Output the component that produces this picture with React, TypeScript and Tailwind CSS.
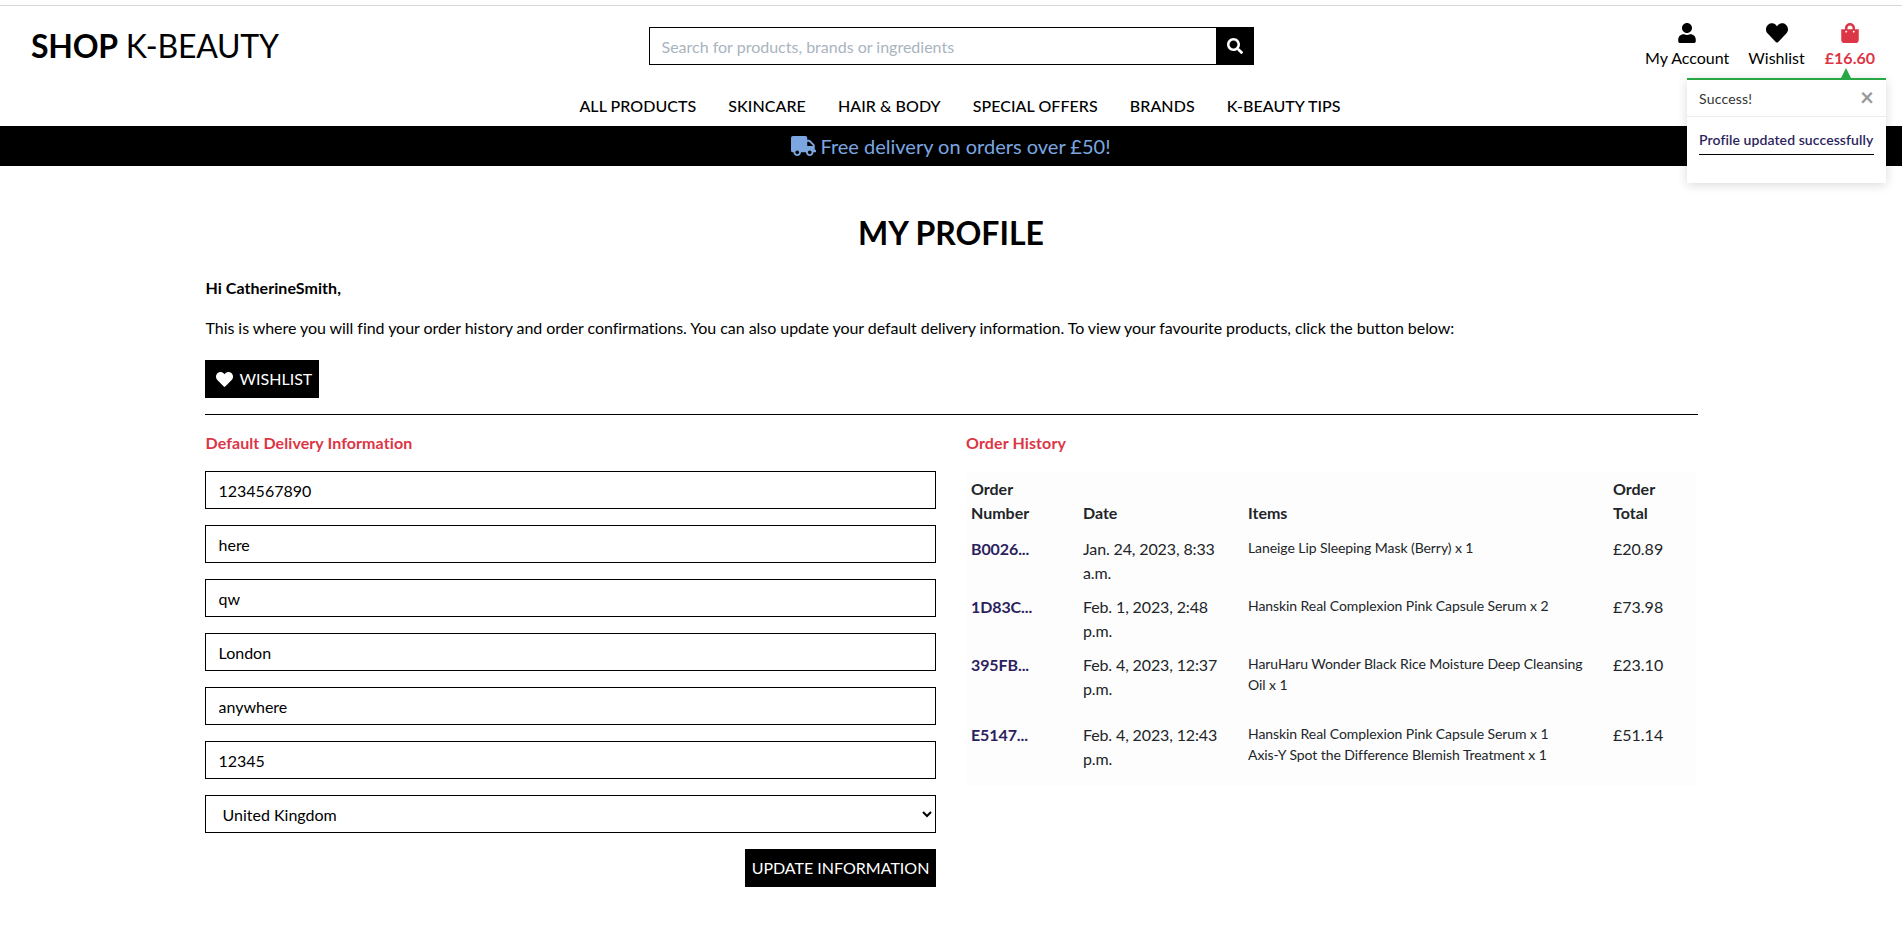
import { FaUser, FaHeart, FaShoppingBag, FaSearch, FaTruck } from "react-icons/fa";

const fields = ["1234567890", "here", "qw", "London", "anywhere", "12345"];

const orders = [
  { no: "B0026...", date: ["Jan. 24, 2023, 8:33", "a.m."], items: ["Laneige Lip Sleeping Mask (Berry) x 1"], total: "£20.89", mb: "" },
  { no: "1D83C...", date: ["Feb. 1, 2023, 2:48", "p.m."], items: ["Hanskin Real Complexion Pink Capsule Serum x 2"], total: "£73.98", mb: "" },
  { no: "395FB...", date: ["Feb. 4, 2023, 12:37", "p.m."], items: ["HaruHaru Wonder Black Rice Moisture Deep Cleansing Oil x 1"], total: "£23.10", mb: "mb-[18px]" },
  { no: "E5147...", date: ["Feb. 4, 2023, 12:43", "p.m."], items: ["Hanskin Real Complexion Pink Capsule Serum x 1", "Axis-Y Spot the Difference Blemish Treatment x 1"], total: "£51.14", mb: "mb-[16px]" },
];

const navItems = ["ALL PRODUCTS", "SKINCARE", "HAIR & BODY", "SPECIAL OFFERS", "BRANDS", "K-BEAUTY TIPS"];

export default function App() {
  return (
    <div className="relative min-h-[926px] bg-white text-black font-['Lato','Liberation_Sans',sans-serif] text-base leading-6">
      <header className="pt-[5px]">
        <div className="border-t border-[#d6d6d6] grid grid-cols-[1fr_605px_1fr] items-start h-[89px]">
          <a className="pl-[31px] pt-[16px] text-[32px] leading-[48px] whitespace-nowrap tracking-[-0.25px]">
            <b className="font-bold">SHOP</b> K-BEAUTY
          </a>
          <form className="flex mt-[21px] h-[38px]">
            <input
              placeholder="Search for products, brands or ingredients"
              className="flex-1 min-w-0 h-full border border-black px-3 text-base outline-none placeholder:text-[#a9b4c0]"
            />
            <button type="button" className="w-[37px] h-full bg-black text-white flex items-center justify-center">
              <FaSearch className="w-4 h-4" />
            </button>
          </form>
          <ul className="flex justify-end gap-[19px] pr-[27px] pt-[17px]">
            <li className="flex flex-col items-center">
              <FaUser className="w-[18px] h-5" />
              <span className="mt-[3px]">My Account</span>
            </li>
            <li className="flex flex-col items-center">
              <FaHeart className="w-[22px] h-[22px] -my-px" />
              <span className="mt-[3px]">Wishlist</span>
            </li>
            <li className="flex flex-col items-center ml-px text-[#dc3545] font-bold">
              <FaShoppingBag className="w-[18px] h-5" />
              <span className="mt-[3px]">£16.60</span>
            </li>
          </ul>
        </div>
        <nav className="flex justify-center gap-8 pl-[18px] pb-2 tracking-[0.06px]">
          {navItems.map((n) => (
            <a key={n} className="whitespace-nowrap [font-weight:500]">{n}</a>
          ))}
        </nav>
      </header>

      <div className="h-10 bg-black flex items-center justify-center gap-[4px] text-[20px] text-[#7ba6e0]">
        <FaTruck className="w-[25px] h-5" />
        <span>Free delivery on orders over £50!</span>
      </div>

      <main className="w-[1493px] mx-auto">
        <h1 className="text-[32px] leading-[38px] font-bold text-center mt-[48px]">MY PROFILE</h1>
        <p className="font-bold mt-[24px] ml-px tracking-[0.05px]">Hi CatherineSmith,</p>
        <p className="mt-[16px] ml-px tracking-[-0.052px]">
          This is where you will find your order history and order confirmations. You can also update your default delivery information. To view your favourite products, click the button below:
        </p>
        <button type="button" className="mt-[20px] h-[38px] w-[114px] bg-black text-white flex items-center pl-[11px] gap-[7px]">
          <FaHeart className="w-[17px] h-[17px]" />
          <span>WISHLIST</span>
        </button>
        <hr className="mt-4 border-t border-black" />

        <div className="grid grid-cols-2 gap-[30px] mt-4">
          <section>
            <h2 className="font-bold text-[#dc3545] ml-px tracking-[0.09px]">Default Delivery Information</h2>
            <form className="mt-4 flex flex-col gap-4">
              {fields.map((f) => (
                <input key={f} defaultValue={f} className="h-[38px] w-full border border-black px-[13px] text-base outline-none" />
              ))}
              <select className="h-[38px] w-full border border-black pl-[13px] pr-1 text-base bg-white appearance-auto outline-none">
                <option>United Kingdom</option>
              </select>
              <div className="flex justify-end">
                <button type="button" className="h-[38px] w-[191px] bg-black text-white">UPDATE INFORMATION</button>
              </div>
            </form>
          </section>

          <section>
            <h2 className="font-bold text-[#dc3545] tracking-[0.12px]">Order History</h2>
            <div className="mt-[17px] w-[730px] bg-[#fdfdfd]">
              <table className="w-full table-fixed border-collapse text-[#212529]">
                <colgroup>
                  <col className="w-[112px]" />
                  <col className="w-[165px]" />
                  <col className="w-[365px]" />
                  <col />
                </colgroup>
                <thead>
                  <tr>
                    <th className="px-[5px] pt-[5px] pb-[7px] text-left align-bottom font-bold">Order Number</th>
                    <th className="px-[5px] pt-[5px] pb-[7px] text-left align-bottom font-bold">Date</th>
                    <th className="px-[5px] pt-[5px] pb-[7px] text-left align-bottom font-bold">Items</th>
                    <th className="px-[5px] pt-[5px] pb-[7px] text-left align-bottom font-bold">Order Total</th>
                  </tr>
                </thead>
                <tbody>
                  {orders.map((o) => (
                    <tr key={o.no}>
                      <td className="px-[5px] py-[5px] align-top font-bold text-[#2c1f5e] tracking-[-0.1px]">{o.no}</td>
                      <td className="px-[5px] py-[5px] align-top tracking-[-0.13px]">
                        {o.date[0]}
                        <br />
                        {o.date[1]}
                      </td>
                      <td className="px-[5px] py-[5px] align-top text-sm leading-[21px] tracking-[-0.07px]">
                        <div className={o.mb}>
                          {o.items.map((i) => (
                            <div key={i}>{i}</div>
                          ))}
                        </div>
                      </td>
                      <td className="px-[5px] py-[5px] align-top">{o.total}</td>
                    </tr>
                  ))}
                </tbody>
              </table>
            </div>
          </section>
        </div>
      </main>

      <div className="absolute left-[1687px] top-[78px] w-[199px] h-[105px] bg-white border-t-2 border-[#28a745] shadow-[0_2px_10px_rgba(0,0,0,0.15)] text-sm">
        <div className="absolute right-[35px] -top-[12px] w-0 h-0 border-x-[5px] border-x-transparent border-b-[10px] border-b-[#28a745]" />
        <div className="h-[37px] flex items-center justify-between pl-3 pr-[12px] pt-px border-b border-[#ececec] text-[#333]">
          <span className="tracking-[0.2px]">Success!</span>
          <span className="text-[24px] leading-none font-bold text-[#999] -mt-1">×</span>
        </div>
        <div className="px-3 pt-[13px]">
          <p className="text-[#2c1f5e] whitespace-nowrap [font-weight:600] tracking-[0.08px] pb-[4px] border-b border-black">Profile updated successfully</p>
        </div>
      </div>
    </div>
  );
}
